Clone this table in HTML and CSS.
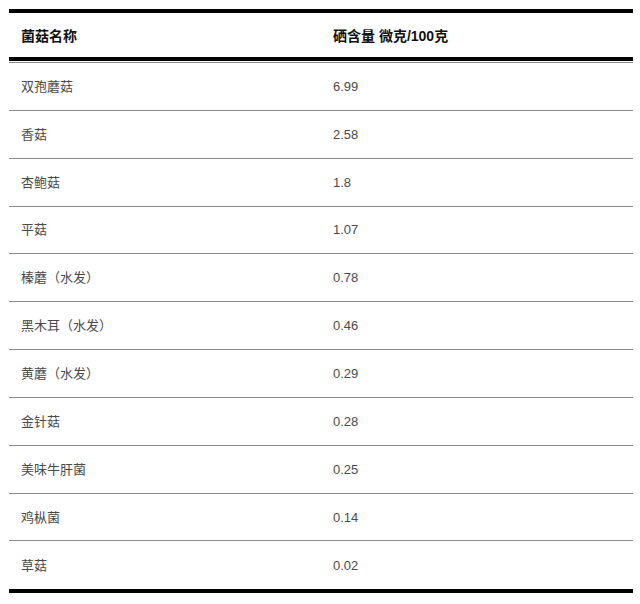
FILE: index.html
```html
<!DOCTYPE html>
<html lang="zh-CN">
<head>
<meta charset="utf-8">
<title>菌菇硒含量</title>
<link rel="stylesheet" href="styles.css">
</head>
<body>
<div class="table">
  <div class="row head">
    <div class="cell">菌菇名称</div>
    <div class="cell">硒含量 微克/100克</div>
  </div>
  <div class="body">
    <div class="row"><div class="cell">双孢蘑菇</div><div class="cell">6.99</div></div>
    <div class="row"><div class="cell">香菇</div><div class="cell">2.58</div></div>
    <div class="row"><div class="cell">杏鲍菇</div><div class="cell">1.8</div></div>
    <div class="row"><div class="cell">平菇</div><div class="cell">1.07</div></div>
    <div class="row"><div class="cell">榛蘑（水发）</div><div class="cell">0.78</div></div>
    <div class="row"><div class="cell">黑木耳（水发）</div><div class="cell">0.46</div></div>
    <div class="row"><div class="cell">黄蘑（水发）</div><div class="cell">0.29</div></div>
    <div class="row"><div class="cell">金针菇</div><div class="cell">0.28</div></div>
    <div class="row"><div class="cell">美味牛肝菌</div><div class="cell">0.25</div></div>
    <div class="row"><div class="cell">鸡枞菌</div><div class="cell">0.14</div></div>
    <div class="row last"><div class="cell">草菇</div><div class="cell">0.02</div></div>
  </div>
</div>
</body>
</html>
```
FILE: styles.css
```css
html, body {
  margin: 0;
  padding: 0;
  background: #ffffff;
}
body {
  padding: 9px 7px 0 9px;
  font-family: "Liberation Sans", "Noto Sans CJK SC", sans-serif;
}
.table {
  width: 624px;
  border-top: 4px solid #000;
  border-bottom: 4px solid #000;
}
.row {
  display: grid;
  grid-template-columns: 312px 312px;
  align-items: center;
  height: 46.85px;
  border-bottom: 1px solid #8a8a8a;
  font-size: 13px;
  line-height: 16px;
  color: #4a4a4a;
}
.row.last {
  border-bottom: none;
  height: 47.6px;
}
.row.head {
  height: 44px;
  border-bottom: 4px solid #000;
  font-size: 14px;
  font-weight: bold;
  color: #111;
}
.body {
  border-top: 1px solid #8a8a8a;
  margin-top: 1px;
}
.cell {
  padding-left: 12px;
  padding-top: 1px;
}
```
